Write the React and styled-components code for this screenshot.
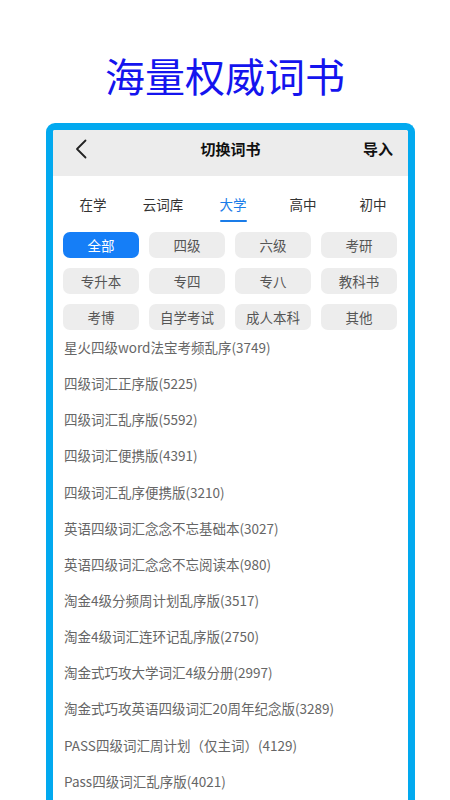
import React from "react";
import styled, { createGlobalStyle } from "styled-components";

const Global = createGlobalStyle`
  html, body { margin: 0; padding: 0; background: #ffffff; }
  body { font-family: "Noto Sans CJK SC", "Noto Sans", sans-serif; overflow: hidden; }
  * { box-sizing: border-box; }
`;

const Page = styled.div`
  width: 450px;
  height: 800px;
  overflow: hidden;
  display: flex;
  flex-direction: column;
`;

const Headline = styled.h1`
  margin: 0;
  height: 123px;
  padding-top: 48px;
  font-size: 40px;
  line-height: 54px;
  font-weight: 400;
  color: #1414ee;
  text-align: center;
  letter-spacing: 0;
`;

const Phone = styled.div`
  margin-left: 46px;
  width: 369px;
  flex: 1;
  border: 7px solid #02a9ef;
  border-bottom: none;
  border-radius: 9px 9px 0 0;
  background: #ffffff;
  overflow: hidden;
`;

const NavBar = styled.div`
  height: 46px;
  padding-bottom: 9px;
  background: #ececec;
  display: grid;
  grid-template-columns: 60px 1fr 60px;
  align-items: center;
`;

const BackBtn = styled.div`
  display: flex;
  align-items: center;
  padding-left: 22px;
  color: #222;
`;

const NavTitle = styled.div`
  text-align: center;
  font-size: 15px;
  font-weight: 700;
  color: #111;
`;

const NavAction = styled.div`
  text-align: right;
  padding-right: 15px;
  font-size: 15px;
  font-weight: 700;
  color: #111;
`;

const Tabs = styled.div`
  display: grid;
  grid-template-columns: repeat(5, 70px);
  padding-left: 5px;
  height: 56px;
`;

const Tab = styled.div`
  position: relative;
  display: flex;
  align-items: center;
  justify-content: center;
  padding-bottom: 1px;
  font-size: 13.5px;
  color: ${(p) => (p.$active ? "#1a7ce8" : "#333")};
`;

const TabLine = styled.span`
  position: absolute;
  left: 50%;
  bottom: 10px;
  width: 27px;
  height: 2px;
  margin-left: -13px;
  border-radius: 1px;
  background: #1a7ce8;
`;

const Chips = styled.div`
  display: grid;
  grid-template-columns: repeat(4, 76px);
  column-gap: 10px;
  row-gap: 10px;
  padding: 0 10px;
`;

const Chip = styled.div`
  height: 26px;
  border-radius: 7px;
  display: flex;
  align-items: center;
  justify-content: center;
  font-size: 13.5px;
  background: ${(p) => (p.$active ? "#157ef7" : "#ededed")};
  color: ${(p) => (p.$active ? "#ffffff" : "#555")};
`;

const List = styled.div`
  display: flex;
  flex-direction: column;
  padding-left: 11px;
  margin-top: -1px;
`;

const Item = styled.div`
  height: 36.15px;
  line-height: 36px;
  font-size: 13.5px;
  color: #666;
  white-space: nowrap;
`;

const tabs = ["在学", "云词库", "大学", "高中", "初中"];
const chips = ["全部", "四级", "六级", "考研", "专升本", "专四", "专八", "教科书", "考博", "自学考试", "成人本科", "其他"];
const books = [
  "星火四级word法宝考频乱序(3749)",
  "四级词汇正序版(5225)",
  "四级词汇乱序版(5592)",
  "四级词汇便携版(4391)",
  "四级词汇乱序便携版(3210)",
  "英语四级词汇念念不忘基础本(3027)",
  "英语四级词汇念念不忘阅读本(980)",
  "淘金4级分频周计划乱序版(3517)",
  "淘金4级词汇连环记乱序版(2750)",
  "淘金式巧攻大学词汇4级分册(2997)",
  "淘金式巧攻英语四级词汇20周年纪念版(3289)",
  "PASS四级词汇周计划（仅主词）(4129)",
  "Pass四级词汇乱序版(4021)",
];

export default function App() {
  return (
    <Page>
      <Global />
      <Headline>海量权威词书</Headline>
      <Phone>
        <NavBar>
          <BackBtn>
            <svg width="12" height="20" viewBox="0 0 12 20" fill="none">
              <path d="M10.5 1.5 L2 10 L10.5 18.5" stroke="#222" strokeWidth="1.8" strokeLinecap="round" strokeLinejoin="round" />
            </svg>
          </BackBtn>
          <NavTitle>切换词书</NavTitle>
          <NavAction>导入</NavAction>
        </NavBar>
        <Tabs>
          {tabs.map((t) => (
            <Tab key={t} $active={t === "大学"}>
              {t}
              {t === "大学" && <TabLine />}
            </Tab>
          ))}
        </Tabs>
        <Chips>
          {chips.map((c) => (
            <Chip key={c} $active={c === "全部"}>{c}</Chip>
          ))}
        </Chips>
        <List>
          {books.map((b) => (
            <Item key={b}>{b}</Item>
          ))}
        </List>
      </Phone>
    </Page>
  );
}
